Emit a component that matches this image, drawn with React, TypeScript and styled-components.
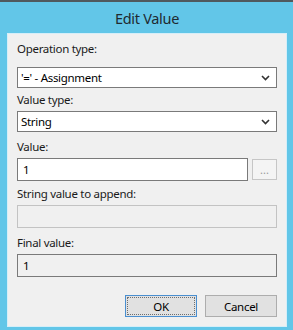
import React from 'react'
import styled, { createGlobalStyle } from 'styled-components'

const GlobalStyle = createGlobalStyle`
  html, body {
    margin: 0;
    padding: 0;
    background: #62c6e8;
  }
  body {
    font-family: "Noto Sans", "Open Sans", sans-serif;
  }
`

const Window = styled.div`
  width: 293px;
  height: 330px;
  box-sizing: border-box;
  background: #62c6e8;
  border-top: 2px solid #50595e;
  display: flex;
  flex-direction: column;
  padding: 0 6px 3px 7px;
`

const TitleBar = styled.div`
  height: 31px;
  display: flex;
  align-items: center;
  justify-content: center;
  font-size: 14.5px;
  color: #1f2a30;
  letter-spacing: -0.3px;
`

const Panel = styled.div`
  flex: 1;
  background: #f0f0f0;
  border: 1px solid #d6eef8;
  display: flex;
  flex-direction: column;
  padding: 8px 9px 0 9px;
`

const Label = styled.div<{ $top?: number; $bottom?: number }>`
  font-size: 11.5px;
  line-height: 14px;
  height: 14px;
  color: #1a1a1a;
  margin-top: ${({ $top }) => $top ?? 0}px;
  margin-bottom: ${({ $bottom }) => $bottom ?? 4}px;
  letter-spacing: -0.3px;
`

const Select = styled.div`
  height: 21px;
  flex: none;
  box-sizing: border-box;
  border: 1px solid #7a7a7a;
  background: #fff;
  display: flex;
  align-items: center;
  justify-content: space-between;
  padding: 0 6px 0 3px;
  font-size: 11.5px;
  color: #000;
  letter-spacing: -0.3px;
`

const Row = styled.div`
  display: flex;
  align-items: center;
  gap: 4px;
`

const TextBox = styled.div<{ $variant?: 'normal' | 'disabled' | 'readonly'; $grow?: boolean }>`
  flex: ${({ $grow }) => ($grow ? '1 1 auto' : 'none')};
  height: 23px;
  box-sizing: border-box;
  border: 1px solid ${({ $variant }) => ($variant === 'disabled' ? '#c3c3c3' : '#7a7a7a')};
  background: ${({ $variant }) => ($variant === 'normal' || !$variant ? '#fff' : '#f0f0f0')};
  display: flex;
  align-items: center;
  padding: 0 5px;
  font-size: 11.5px;
  color: #000;
`

const BrowseButton = styled.div`
  width: 25px;
  height: 21px;
  flex: none;
  box-sizing: border-box;
  border: 1px solid #c6c6c6;
  background: #f4f4f4;
  color: #9a9a9a;
  font-size: 11px;
  display: flex;
  align-items: flex-end;
  justify-content: center;
  padding-bottom: 5px;
  line-height: 8px;
`

const ButtonRow = styled.div`
  display: flex;
  justify-content: flex-end;
  gap: 8px;
  margin-top: 18px;
`

const Button = styled.div<{ $primary?: boolean }>`
  width: 72px;
  height: 22px;
  box-sizing: border-box;
  border: 1px solid ${({ $primary }) => ($primary ? '#4a8fd0' : '#adadad')};
  background: #e1e1e1;
  display: flex;
  align-items: center;
  justify-content: center;
  font-size: 11.5px;
  color: #000;
  position: relative;
  letter-spacing: -0.3px;
  &::after {
    content: '';
    display: ${({ $primary }) => ($primary ? 'block' : 'none')};
    position: absolute;
    inset: 1px;
    border: 1px dotted #6e6e6e;
  }
`

const Chevron = () => (
  <svg width="9" height="6" viewBox="0 0 9 6">
    <path d="M1 1 L4.5 4.5 L8 1" fill="none" stroke="#333" strokeWidth="1.6" />
  </svg>
)

export default function App() {
  return (
    <>
      <GlobalStyle />
      <Window>
        <TitleBar>Edit Value</TitleBar>
        <Panel>
          <Label $bottom={11}>Operation type:</Label>
          <Select>
            <span>'=' - Assignment</span>
            <Chevron />
          </Select>
          <Label $top={5}>Value type:</Label>
          <Select>
            <span>String</span>
            <Chevron />
          </Select>
          <Label $top={8}>Value:</Label>
          <Row>
            <TextBox $grow>1</TextBox>
            <BrowseButton>...</BrowseButton>
          </Row>
          <Label $top={6}>String value to append:</Label>
          <TextBox $variant="disabled" />
          <Label $top={8}>Final value:</Label>
          <TextBox $variant="readonly">1</TextBox>
          <ButtonRow>
            <Button $primary>OK</Button>
            <Button>Cancel</Button>
          </ButtonRow>
        </Panel>
      </Window>
    </>
  )
}
